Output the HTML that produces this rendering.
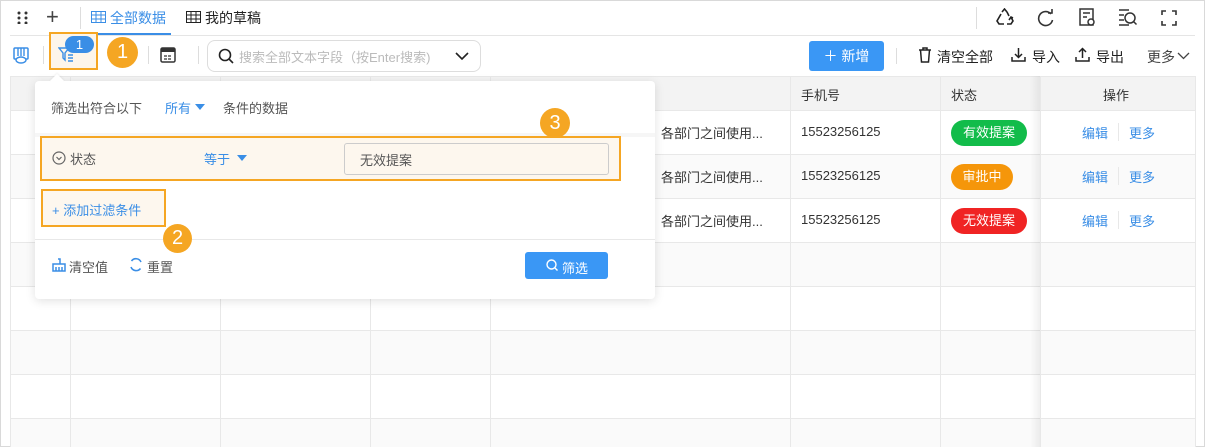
<!DOCTYPE html>
<html><head><meta charset="utf-8"><style>
*{box-sizing:border-box;margin:0;padding:0}
body{width:1205px;height:447px;overflow:hidden;background:#fff;font-family:"Liberation Sans","Noto Sans CJK SC",sans-serif;font-size:13px;color:#333;position:relative}
.a{position:absolute}
.frame{left:0;top:0;width:1205px;height:447px;border:1px solid #d9d9d9}
.t{position:absolute;white-space:nowrap}
.vl{position:absolute;width:1px;background:#e8e8e8}
.hl{position:absolute;height:1px;background:#e8e8e8}
.badge{position:absolute;border-radius:50%;background:#f5a623;color:#fff;text-align:center;font-size:20px}
.pill{position:absolute;color:#fff;border-radius:14px;text-align:center;font-size:13px;height:26px;line-height:26px}
.lk{color:#3a8ee6}
</style></head><body>
<div class="a frame"></div>
<svg class="a" style="left:16px;top:10px" width="14" height="14"><g fill="#333"><circle cx="3" cy="3" r="1.5"/><circle cx="10" cy="3" r="1.5"/><circle cx="3" cy="8" r="1.5"/><circle cx="10" cy="8" r="1.5"/><circle cx="3" cy="13" r="1.5"/><circle cx="10" cy="13" r="1.5"/></g></svg>
<div class="t" style="left:46px;top:4px;font-size:22px;color:#444;font-weight:300">+</div>
<div class="vl" style="left:80px;top:7px;height:22px;background:#ddd"></div>
<svg class="a" style="left:91px;top:11px" width="15" height="12"><rect x=".5" y=".5" width="14" height="11" fill="none" stroke="#3a8ee6"/><path d="M0 4h15M0 8h15M5 0v12M10 0v12" stroke="#3a8ee6"/></svg>
<div class="t" style="left:110px;top:8px;color:#3a8ee6;font-size:14px">全部数据</div>
<div class="a" style="left:90px;top:33px;width:81px;height:2px;background:#3a8ee6"></div>
<svg class="a" style="left:186px;top:11px" width="15" height="12"><rect x=".5" y=".5" width="14" height="11" fill="none" stroke="#222"/><path d="M0 4h15M0 8h15M5 0v12M10 0v12" stroke="#222"/></svg>
<div class="t" style="left:205px;top:8px;color:#222;font-size:14px">我的草稿</div>
<div class="hl" style="left:10px;top:35px;width:1185px;background:#e5e5e5"></div>
<div class="vl" style="left:976px;top:7px;height:22px;background:#ddd"></div>
<svg class="a" style="left:995px;top:8px" width="19" height="18"><g fill="none" stroke="#222" stroke-width="1.6"><path d="M7 4l2.5-3 2.5 3M12 4l2 4"/><path d="M6 6l-4 7 2 3h5"/><path d="M12 16h4l2-3-2-4"/><path d="M14 12l2-3 2 1"/></g></svg>
<svg class="a" style="left:1037px;top:9px" width="18" height="18"><path d="M14 5A7 7 0 1 0 15.5 11" fill="none" stroke="#333" stroke-width="1.6"/><path d="M11 4h4V0" fill="none" stroke="#333" stroke-width="1.6"/></svg>
<svg class="a" style="left:1079px;top:8px" width="18" height="20"><rect x="1" y="1" width="13" height="16" fill="none" stroke="#333" stroke-width="1.5"/><path d="M4 5h7M4 9h4" stroke="#333" stroke-width="1.5"/><circle cx="12" cy="14" r="3" fill="#fff" stroke="#333" stroke-width="1.5"/></svg>
<svg class="a" style="left:1118px;top:9px" width="20" height="18"><path d="M1 1h10M1 6h5M1 11h5M1 16h10" stroke="#333" stroke-width="1.4"/><circle cx="12" cy="9" r="5" fill="none" stroke="#333" stroke-width="1.5"/><path d="M15.5 12.5l3 3" stroke="#333" stroke-width="1.5"/></svg>
<svg class="a" style="left:1161px;top:10px" width="16" height="16"><path d="M1 5V1h4M11 1h4v4M15 11v4h-4M5 15H1v-4" fill="none" stroke="#333" stroke-width="1.6"/></svg>
<svg class="a" style="left:13px;top:47px" width="16" height="17"><rect x="1" y="1" width="14" height="11" rx="1" fill="none" stroke="#3a8ee6" stroke-width="1.5"/><path d="M5 1v8M8 1v8M11 1v8" stroke="#3a8ee6" stroke-width="1.4"/><ellipse cx="8" cy="13" rx="5" ry="3" fill="#fff" stroke="#3a8ee6" stroke-width="1.4"/></svg>
<div class="vl" style="left:43px;top:46px;height:18px;background:#ddd"></div>
<div class="a" style="left:49px;top:32px;width:49px;height:38px;border:2px solid #f5a623;background:#fdf5ea"></div>
<svg class="a" style="left:58px;top:46px" width="16" height="16"><path d="M1 2h10L7 7v7L5 12V7z" fill="none" stroke="#3a8ee6" stroke-width="1.4"/><path d="M10 9h5M10 12h5M10 15h5" stroke="#3a8ee6" stroke-width="1.4"/></svg>
<div class="pill" style="left:65px;top:36px;width:29px;height:17px;line-height:17px;background:#3a8ee6;border-radius:9px;font-size:13px">1</div>
<div class="badge" style="left:107px;top:37px;width:31px;height:31px;line-height:31px">1</div>
<div class="vl" style="left:148px;top:46px;height:18px;background:#ddd"></div>
<svg class="a" style="left:160px;top:47px" width="16" height="16"><rect x="1" y="1" width="14" height="14" rx="1.5" fill="none" stroke="#333" stroke-width="1.5"/><rect x="1" y="1" width="14" height="4" fill="#333"/><path d="M4 9h8M4 12h8" stroke="#333" stroke-width="1.2" stroke-dasharray="3 1"/></svg>
<div class="vl" style="left:198px;top:46px;height:18px;background:#ddd"></div>
<div class="a" style="left:207px;top:40px;width:274px;height:32px;border:1px solid #ddd;border-radius:8px"></div>
<svg class="a" style="left:218px;top:48px" width="16" height="16"><circle cx="7" cy="7" r="5.5" fill="none" stroke="#222" stroke-width="1.6"/><path d="M11 11l4 4" stroke="#222" stroke-width="1.6"/></svg>
<div class="t" style="left:239px;top:47px;color:#bbb">搜索全部文本字段（按Enter搜索)</div>
<svg class="a" style="left:455px;top:52px" width="14" height="9"><path d="M1 1l6 6 6-6" fill="none" stroke="#222" stroke-width="1.6"/></svg>
<div class="a" style="left:809px;top:41px;width:75px;height:30px;background:#3a97f5;border-radius:3px;color:#fff;text-align:center;line-height:30px;font-size:14px">＋ 新增</div>
<div class="vl" style="left:896px;top:48px;height:16px;background:#ddd"></div>
<svg class="a" style="left:918px;top:47px" width="14" height="16"><path d="M1 3h12M5 3V1h4v2M2.5 3l1 12h7l1-12" fill="none" stroke="#222" stroke-width="1.5"/></svg>
<div class="t" style="left:937px;top:47px;font-size:14px;color:#222">清空全部</div>
<svg class="a" style="left:1011px;top:47px" width="15" height="15"><path d="M7.5 1v9M4 7l3.5 3.5L11 7M1 10v4h13v-4" fill="none" stroke="#222" stroke-width="1.5"/></svg>
<div class="t" style="left:1032px;top:47px;font-size:14px;color:#222">导入</div>
<svg class="a" style="left:1075px;top:47px" width="15" height="15"><path d="M7.5 11V2M4 5l3.5-3.5L11 5M1 10v4h13v-4" fill="none" stroke="#222" stroke-width="1.5"/></svg>
<div class="t" style="left:1096px;top:47px;font-size:14px;color:#222">导出</div>
<div class="t" style="left:1147px;top:47px;font-size:14px;color:#444">更多</div>
<svg class="a" style="left:1177px;top:52px" width="13" height="8"><path d="M1 1l5.5 5.5L12 1" fill="none" stroke="#444" stroke-width="1.3"/></svg>
<div class="a" style="left:10px;top:77px;width:1185px;height:33px;background:#f3f3f3"></div>
<div class="a" style="left:10px;top:154px;width:1185px;height:44px;background:#fafafa"></div>
<div class="a" style="left:10px;top:242px;width:1185px;height:44px;background:#fafafa"></div>
<div class="a" style="left:10px;top:330px;width:1185px;height:44px;background:#fafafa"></div>
<div class="a" style="left:10px;top:418px;width:1185px;height:29px;background:#fafafa"></div>
<div class="hl" style="left:10px;top:76px;width:1185px"></div>
<div class="hl" style="left:10px;top:110px;width:1185px"></div>
<div class="hl" style="left:10px;top:154px;width:1185px"></div>
<div class="hl" style="left:10px;top:198px;width:1185px"></div>
<div class="hl" style="left:10px;top:242px;width:1185px"></div>
<div class="hl" style="left:10px;top:286px;width:1185px"></div>
<div class="hl" style="left:10px;top:330px;width:1185px"></div>
<div class="hl" style="left:10px;top:374px;width:1185px"></div>
<div class="hl" style="left:10px;top:418px;width:1185px"></div>
<div class="vl" style="left:10px;top:76px;height:371px"></div>
<div class="vl" style="left:70px;top:76px;height:371px"></div>
<div class="vl" style="left:220px;top:76px;height:371px"></div>
<div class="vl" style="left:370px;top:76px;height:371px"></div>
<div class="vl" style="left:490px;top:76px;height:371px"></div>
<div class="vl" style="left:790px;top:76px;height:371px"></div>
<div class="vl" style="left:940px;top:76px;height:371px"></div>
<div class="vl" style="left:1195px;top:76px;height:371px"></div>
<div class="a" style="left:1030px;top:76px;width:10px;height:371px;background:linear-gradient(90deg,rgba(0,0,0,0),rgba(0,0,0,.06))"></div>
<div class="vl" style="left:1040px;top:76px;height:371px"></div>
<div class="t" style="left:801px;top:85px">手机号</div>
<div class="t" style="left:951px;top:85px">状态</div>
<div class="t" style="left:1103px;top:85px">操作</div>
<div class="t" style="left:661px;top:123px">各部门之间使用...</div>
<div class="t" style="left:661px;top:167px">各部门之间使用...</div>
<div class="t" style="left:661px;top:211px">各部门之间使用...</div>
<div class="t" style="left:801px;top:124px">15523256125</div>
<div class="t" style="left:801px;top:168px">15523256125</div>
<div class="t" style="left:801px;top:212px">15523256125</div>
<div class="pill" style="left:951px;top:120px;width:76px;background:#12bc4a">有效提案</div>
<div class="pill" style="left:951px;top:164px;width:62px;background:#f5960a">审批中</div>
<div class="pill" style="left:951px;top:208px;width:76px;background:#f02424">无效提案</div>
<div class="t lk" style="left:1082px;top:123px">编辑</div><div class="vl" style="left:1118px;top:123px;height:18px"></div><div class="t lk" style="left:1129px;top:123px">更多</div>
<div class="t lk" style="left:1082px;top:167px">编辑</div><div class="vl" style="left:1118px;top:167px;height:18px"></div><div class="t lk" style="left:1129px;top:167px">更多</div>
<div class="t lk" style="left:1082px;top:211px">编辑</div><div class="vl" style="left:1118px;top:211px;height:18px"></div><div class="t lk" style="left:1129px;top:211px">更多</div>
<div class="a" style="left:35px;top:81px;width:620px;height:218px;background:#fff;border-radius:4px;box-shadow:0 2px 10px rgba(0,0,0,.12)"></div>
<div class="a" style="left:52px;top:76px;width:10px;height:10px;background:#fff;transform:rotate(45deg);box-shadow:-1px -1px 2px rgba(0,0,0,.05)"></div>
<div class="t" style="left:51px;top:98px;color:#555">筛选出符合以下</div>
<div class="t" style="left:165px;top:98px;color:#3a8ee6">所有</div>
<svg class="a" style="left:195px;top:104px" width="10" height="6"><path d="M0 0h10L5 6z" fill="#3a8ee6"/></svg>
<div class="t" style="left:223px;top:98px;color:#555">条件的数据</div>
<div class="a" style="left:35px;top:133px;width:620px;height:4px;background:#f6f6f6"></div>
<div class="a" style="left:40px;top:136px;width:581px;height:45px;border:2px solid #f5a623;background:#fdf7ee"></div>
<svg class="a" style="left:52px;top:151px" width="14" height="14"><circle cx="7" cy="7" r="6" fill="none" stroke="#666" stroke-width="1.2"/><path d="M4.5 6l2.5 2.5L9.5 6" fill="none" stroke="#666" stroke-width="1.2"/></svg>
<div class="t" style="left:70px;top:149px;color:#555">状态</div>
<div class="t" style="left:204px;top:149px;color:#3a8ee6">等于</div>
<svg class="a" style="left:237px;top:155px" width="10" height="6"><path d="M0 0h10L5 6z" fill="#3a8ee6"/></svg>
<div class="a" style="left:344px;top:143px;width:265px;height:32px;border:1px solid #ccc;border-radius:3px"></div>
<div class="t" style="left:360px;top:150px;color:#555">无效提案</div>
<div class="a" style="left:41px;top:189px;width:125px;height:38px;border:2px solid #f5a623;background:#fdf7ee"></div>
<div class="t" style="left:52px;top:200px;color:#3a8ee6">+ 添加过滤条件</div>
<div class="hl" style="left:35px;top:239px;width:620px"></div>
<svg class="a" style="left:52px;top:258px" width="14" height="14"><path d="M6 1h2v5M1 6h12v7H1zM4 9v4M7 9v4M10 9v4" fill="none" stroke="#3a8ee6" stroke-width="1.5"/></svg>
<div class="t" style="left:69px;top:257px;color:#555">清空值</div>
<svg class="a" style="left:129px;top:257px" width="14" height="15"><path d="M12 5A5.5 5.5 0 0 0 2.5 4M2 10a5.5 5.5 0 0 0 9.5 1.5" fill="none" stroke="#3a8ee6" stroke-width="1.6"/></svg>
<div class="t" style="left:147px;top:257px;color:#555">重置</div>
<div class="a" style="left:525px;top:252px;width:83px;height:27px;background:#3a97f5;border-radius:3px"></div>
<svg class="a" style="left:546px;top:259px" width="12" height="13"><circle cx="5.5" cy="5.5" r="4.5" fill="none" stroke="#fff" stroke-width="1.4"/><path d="M8.5 8.5l3 3" stroke="#fff" stroke-width="1.4"/></svg>
<div class="t" style="left:562px;top:258px;color:#fff">筛选</div>
<div class="badge" style="left:540px;top:108px;width:30px;height:30px;line-height:30px">3</div>
<div class="badge" style="left:163px;top:224px;width:29px;height:29px;line-height:29px">2</div>
</body></html>
